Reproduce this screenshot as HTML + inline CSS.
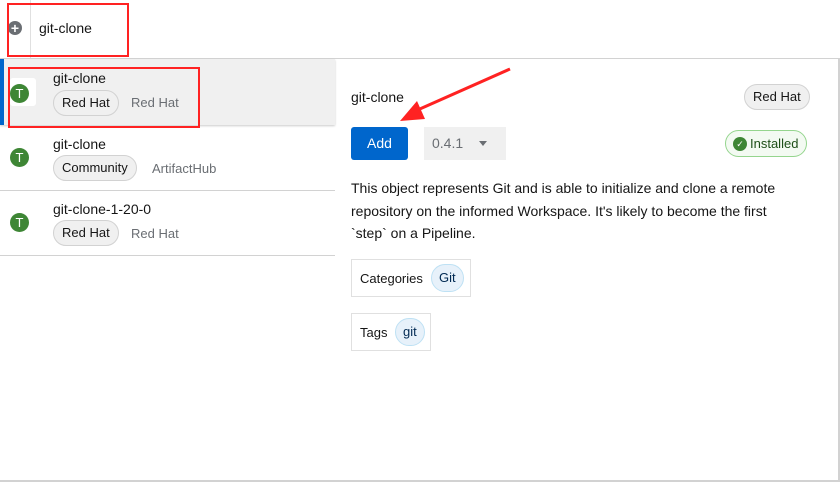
<!DOCTYPE html>
<html><head><style>
*{box-sizing:border-box;margin:0;padding:0}
body{width:840px;height:482px;background:#fff;font-family:"Liberation Sans",sans-serif;color:#151515;position:relative;overflow:hidden;font-size:13px}
.a{position:absolute}
.pill{position:absolute;border:1px solid #d2d2d2;background:#f0f0f0;border-radius:14px;height:26px;line-height:24px;padding:0 8px;font-size:13px;color:#151515}
.muted{position:absolute;color:#6a6e73;font-size:13px}
.t{position:absolute;width:19px;height:19px;border-radius:50%;background:#3e8635;color:#fff;font-size:13px;text-align:center;line-height:19px}
.name{position:absolute;font-size:14px}
.box{position:absolute;border:1px solid #e0e0e0;height:38px}
.tag{position:absolute;background:#e7f1fa;border:1px solid #bee1f4;border-radius:14px;height:28px;line-height:26px;padding:0 7px;color:#002952;font-size:13px}
</style></head><body>
<div class="a" style="left:0;top:58px;width:840px;height:1px;background:#d2d2d2"></div>
<div class="a" style="left:30px;top:0;width:1px;height:58px;background:#e0e0e0"></div>
<div class="a" style="left:8px;top:21px;width:14px;height:14px;border-radius:50%;background:#6a6e73;color:#fff;font-size:14px;line-height:14px;text-align:center;font-weight:bold">+</div>
<div class="a" style="left:39px;top:20px;font-size:14px">git-clone</div>
<div class="a" style="left:7px;top:3px;width:122px;height:54px;border:2px solid #f22"></div>

<div class="a" style="left:0;top:59px;width:335px;height:66px;background:#f0f0f0;box-shadow:0 1px 2px #ccc"></div>
<div class="a" style="left:0;top:59px;width:4px;height:66px;background:#06c"></div>
<div class="a" style="left:10px;top:78px;width:26px;height:28px;background:#fff;border-radius:3px"></div>
<div class="t" style="left:10px;top:84px">T</div>
<div class="name" style="left:53px;top:70px">git-clone</div>
<div class="pill" style="left:53px;top:90px">Red Hat</div>
<div class="muted" style="left:131px;top:95px">Red Hat</div>
<div class="a" style="left:8px;top:67px;width:192px;height:61px;border:2px solid #f22"></div>

<div class="t" style="left:10px;top:148px">T</div>
<div class="name" style="left:53px;top:136px">git-clone</div>
<div class="pill" style="left:53px;top:155px">Community</div>
<div class="muted" style="left:152px;top:161px">ArtifactHub</div>
<div class="a" style="left:0;top:190px;width:335px;height:1px;background:#d2d2d2"></div>

<div class="t" style="left:10px;top:213px">T</div>
<div class="name" style="left:53px;top:201px">git-clone-1-20-0</div>
<div class="pill" style="left:53px;top:220px">Red Hat</div>
<div class="muted" style="left:131px;top:226px">Red Hat</div>
<div class="a" style="left:0;top:255px;width:335px;height:1px;background:#d2d2d2"></div>

<div class="name" style="left:351px;top:89px">git-clone</div>
<div class="pill" style="left:744px;top:84px">Red Hat</div>
<div class="a" style="left:351px;top:127px;width:57px;height:33px;background:#06c;border-radius:3px;color:#fff;font-size:14px;text-align:center;line-height:33px">Add</div>
<div class="a" style="left:424px;top:127px;width:82px;height:33px;background:#f0f0f0;color:#6a6e73;font-size:14px;line-height:33px;padding-left:8px">0.4.1<span style="position:absolute;left:55px;top:14px;border:4px solid transparent;border-top:5px solid #6a6e73"></span></div>
<div class="a" style="left:725px;top:130px;width:82px;height:27px;border:1px solid #95d58e;background:#f3faf2;border-radius:14px;font-size:13px;line-height:25px;padding-left:24px;color:#1e4f18">Installed<span style="position:absolute;left:7px;top:6px;width:14px;height:14px;border-radius:50%;background:#3e8635;color:#fff;font-size:9px;line-height:14px;text-align:center">✓</span></div>
<div class="a" style="left:351px;top:177px;width:440px;font-size:14px;line-height:22.5px">This object represents Git and is able to initialize and clone a remote repository on the informed Workspace. It's likely to become the first `step` on a Pipeline.</div>
<div class="box" style="left:351px;top:259px;width:120px"><span class="a" style="left:8px;top:11px">Categories</span><span class="tag" style="left:79px;top:4px">Git</span></div>
<div class="box" style="left:351px;top:313px;width:80px"><span class="a" style="left:8px;top:11px">Tags</span><span class="tag" style="left:43px;top:4px">git</span></div>
<div class="a" style="left:838px;top:58px;width:2px;height:424px;background:#d2d2d2"></div>
<div class="a" style="left:0;top:480px;width:840px;height:2px;background:#d2d2d2"></div>
<svg class="a" style="left:395px;top:65px" width="120" height="60"><line x1="115" y1="4" x2="18" y2="47" stroke="#f22" stroke-width="3"/><polygon points="5,56 22,36 30,54" fill="#f22"/></svg>
</body></html>
